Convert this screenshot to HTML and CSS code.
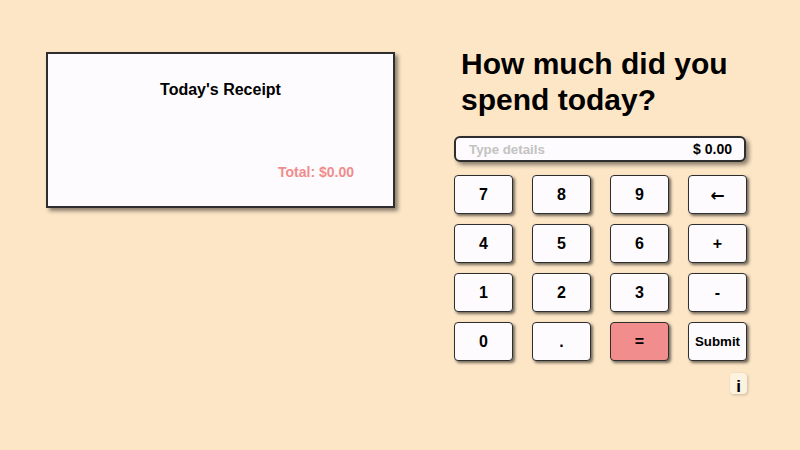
FILE: index.html
```html
<!DOCTYPE html>
<html lang="en">
<head>
<meta charset="utf-8">
<title>Spending Calculator</title>
<link rel="stylesheet" href="styles.css">
</head>
<body>
<div class="page">
  <section class="receipt">
    <h2 class="receipt-title">Today's Receipt</h2>
    <div class="receipt-items"></div>
    <div class="receipt-total">Total: $0.00</div>
  </section>
  <section class="calc">
    <h1 class="question">How much did you spend today?</h1>
    <div class="display">
      <input class="details" type="text" placeholder="Type details">
      <span class="amount">$ 0.00</span>
    </div>
    <div class="keys">
      <button class="key">7</button>
      <button class="key">8</button>
      <button class="key">9</button>
      <button class="key key-arrow">&larr;</button>
      <button class="key">4</button>
      <button class="key">5</button>
      <button class="key">6</button>
      <button class="key">+</button>
      <button class="key">1</button>
      <button class="key">2</button>
      <button class="key">3</button>
      <button class="key">-</button>
      <button class="key">0</button>
      <button class="key">.</button>
      <button class="key key-equals">=</button>
      <button class="key key-submit">Submit</button>
    </div>
    <div class="info-row">
      <button class="info">i</button>
    </div>
  </section>
</div>
</body>
</html>
```

FILE: styles.css
```css
html, body {
  margin: 0;
  padding: 0;
}
body {
  background: #fde6c6;
  font-family: "Liberation Sans", Arial, sans-serif;
  color: #000;
  width: 800px;
  height: 450px;
  overflow: hidden;
}
.page {
  display: flex;
  align-items: flex-start;
  padding-left: 46px;
  gap: 59px;
}
.receipt {
  box-sizing: border-box;
  margin-top: 52px;
  width: 349px;
  height: 156px;
  background: #fdfbfd;
  border: 2px solid #2e2e2e;
  box-shadow: 3px 3px 4px rgba(0, 0, 0, 0.45);
  display: flex;
  flex-direction: column;
  padding: 27px 39px 26px 39px;
}
.receipt-title {
  margin: 0;
  text-align: center;
  font-size: 16px;
  font-weight: bold;
  line-height: 18px;
}
.receipt-items {
  flex: 1;
}
.receipt-total {
  text-align: right;
  font-size: 14px;
  font-weight: bold;
  color: #f08d8c;
  line-height: 16px;
}
.calc {
  width: 294px;
  margin-top: 46px;
  display: flex;
  flex-direction: column;
}
.question {
  margin: 0 0 18px 7px;
  font-size: 30px;
  line-height: 36px;
  font-weight: bold;
  letter-spacing: 0;
}
.display {
  box-sizing: border-box;
  height: 26px;
  width: 292px;
  background: #fdfbfd;
  border: 2px solid #2e2e2e;
  border-radius: 6px;
  box-shadow: 3px 3px 4px rgba(0, 0, 0, 0.45);
  display: flex;
  align-items: center;
  padding: 0 12px 0 13px;
}
.details {
  flex: 1;
  min-width: 0;
  border: none;
  outline: none;
  background: transparent;
  padding: 0;
  font-family: inherit;
  font-size: 13.3px;
  font-weight: bold;
  color: #000;
}
.details::placeholder {
  color: #c3c3c3;
}
.amount {
  font-size: 14px;
  font-weight: bold;
}
.keys {
  margin-top: 13px;
  display: grid;
  grid-template-columns: repeat(4, 59px);
  grid-auto-rows: 39px;
  column-gap: 19px;
  row-gap: 10px;
}
.key {
  box-sizing: border-box;
  margin: 0;
  padding: 0;
  background: #fdfbfd;
  border: 1.5px solid #2e2e2e;
  border-radius: 4px;
  box-shadow: 2px 2px 3px rgba(0, 0, 0, 0.55);
  font-family: inherit;
  font-size: 16px;
  font-weight: bold;
  color: #000;
}
.key-arrow {
  font-family: "DejaVu Sans", sans-serif;
  font-size: 17px;
}
.key-equals {
  background: #f28d8e;
}
.key-submit {
  font-size: 13.3px;
}
.info-row {
  display: flex;
  justify-content: flex-end;
  padding-right: 1px;
  margin-top: 12px;
}
.info {
  box-sizing: border-box;
  width: 17px;
  height: 21px;
  margin: 0;
  padding: 0;
  border: none;
  border-radius: 4px;
  background: #fcf2e0;
  box-shadow: 1px 1px 3px rgba(0, 0, 0, 0.2);
  font-family: inherit;
  font-size: 17px;
  font-weight: bold;
  color: #000;
  display: flex;
  align-items: flex-end;
  justify-content: center;
  line-height: 15px;
}
```
